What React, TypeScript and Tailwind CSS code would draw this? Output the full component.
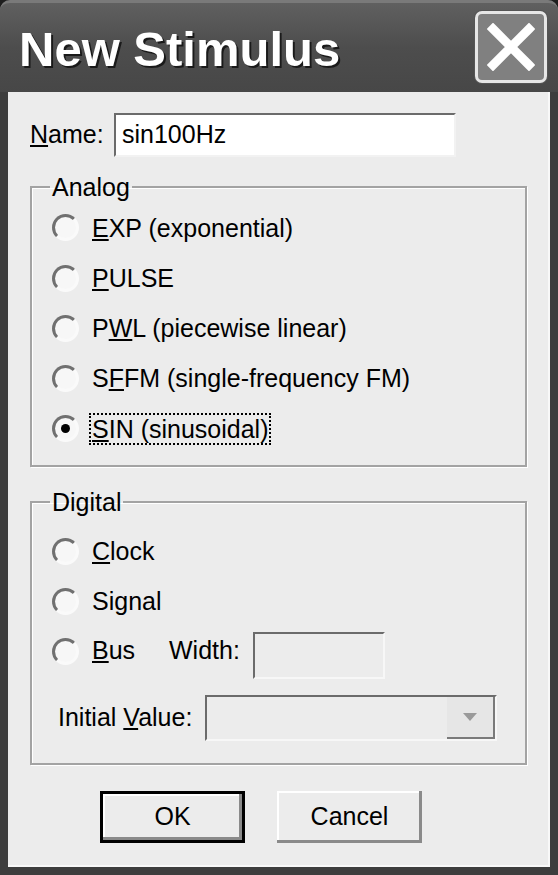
import React from 'react';

const font = { fontFamily: '"Liberation Sans", Arial, sans-serif' };

function Radio({ checked = false }: { checked?: boolean }) {
  return (
    <span className="relative flex h-[27px] w-[27px] shrink-0 items-center justify-center rounded-full border-[3px] border-t-[#707070] border-l-[#707070] border-r-[#fafafa] border-b-[#fafafa] bg-[#f7f7f7]">
      {checked && <span className="h-[9px] w-[9px] rounded-full bg-black" />}
    </span>
  );
}

function RadioRow({
  label,
  checked,
  focused,
  height = 'h-[50px]',
}: {
  label: React.ReactNode;
  checked?: boolean;
  focused?: boolean;
  height?: string;
}) {
  return (
    <div className={`flex items-center ${height}`}>
      <Radio checked={checked} />
      <span
        className={
          focused
            ? 'ml-[10px] border-2 border-dotted border-black px-[1px] leading-[28px]'
            : 'ml-[13px] leading-[28px]'
        }
      >
        {label}
      </span>
    </div>
  );
}

const etched =
  'border-2 border-[#a3a3a3] shadow-[inset_1px_1px_0_#ffffff,1px_1px_0_#ffffff]';

export default function App() {
  return (
    <div
      className="flex h-[875px] w-[558px] flex-col overflow-hidden bg-[#1e1e1e] text-[25px] text-black"
      style={font}
    >
      <div className="flex h-full flex-col rounded-t-[10px] bg-[#3d3d3d]">
        {/* Title bar */}
        <div className="flex h-[92px] shrink-0 items-center justify-between rounded-t-[10px] border-t-[3px] border-[#7a7a7a] bg-gradient-to-b from-[#606060] via-[#4d4d4d] to-[#474747] pl-[19px] pr-[11px]">
          <span className="mt-[4px] text-[49px] font-bold text-white [text-shadow:2px_2px_0_#1a1a1a]">
            New Stimulus
          </span>
          <div className="mt-[-1px] flex h-[72px] w-[72px] items-center justify-center rounded-[7px] border-[3px] border-[#e6e6e6] bg-[#808080] shadow-[0_0_0_1px_#555]">
            <svg width="48" height="48" viewBox="0 0 48 48">
              <path d="M6 6 L42 42 M42 6 L6 42" stroke="#ffffff" strokeWidth="9" strokeLinecap="square" />
            </svg>
          </div>
        </div>

        {/* Client area */}
        <div className="mx-[8px] mb-[8px] flex flex-1 flex-col bg-[#ececec] pl-[22px] pt-[21px] shadow-[inset_-2px_0_0_#f8f8f8,inset_0_-2px_0_#f8f8f8]">
          {/* Name */}
          <div className="flex items-center">
            <span className="w-[84px]">
              <u>N</u>ame:
            </span>
            <div className="flex h-[44px] w-[342px] items-center border-2 border-t-[#6b6b6b] border-l-[#6b6b6b] border-r-[#f2f2f2] border-b-[#f2f2f2] bg-white pl-[6px]">
              sin100Hz
            </div>
          </div>

          {/* Analog */}
          <fieldset className={`mt-[16px] w-[497px] pb-[11px] pl-[18px] ${etched}`}>
            <legend className="px-[2px] leading-[28px]">Analog</legend>
            <div className="ml-[2px] pt-[1px]">
              <RadioRow label={<><u>E</u>XP (exponential)</>} height="h-[51px]" />
              <RadioRow label={<><u>P</u>ULSE</>} height="h-[50px]" />
              <RadioRow label={<>P<u>W</u>L (piecewise linear)</>} height="h-[50px]" />
              <RadioRow label={<>S<u>F</u>FM (single-frequency FM)</>} height="h-[50px]" />
              <RadioRow label={<><u>S</u>IN (sinusoidal)</>} checked focused height="h-[51px]" />
            </div>
          </fieldset>

          {/* Digital */}
          <fieldset className={`mt-[21px] w-[497px] pb-[22px] pl-[18px] ${etched}`}>
            <legend className="px-[2px] leading-[28px]">Digital</legend>
            <div className="ml-[2px] pt-[10px]">
              <RadioRow label={<><u>C</u>lock</>} />
              <RadioRow label="Signal" />
              <div className="flex h-[50px] items-center">
                <Radio />
                <span className="ml-[13px] w-[77px]">
                  <u>B</u>us
                </span>
                <span className="w-[84px]">Width:</span>
                <div className="mt-[8px] h-[47px] w-[132px] border-2 border-t-[#6b6b6b] border-l-[#6b6b6b] border-r-[#f7f7f7] border-b-[#f7f7f7] bg-[#ececec]" />
              </div>
              <div className="mt-[19px] flex items-center">
                <span className="ml-[6px] w-[147px]">
                  Initial <u>V</u>alue:
                </span>
                <div className="flex h-[46px] w-[292px] items-stretch justify-end border-2 border-t-[#6b6b6b] border-l-[#6b6b6b] border-r-[#f7f7f7] border-b-[#f7f7f7] bg-[#ececec]">
                  <div className="flex w-[48px] items-center justify-center border-b-2 border-r-2 border-[#7a7a7a] bg-[#e6e6e6]">
                    <svg width="16" height="10" viewBox="0 0 16 10">
                      <path d="M1 1 H15 L8 9 Z" fill="#9a9a9a" />
                    </svg>
                  </div>
                </div>
              </div>
            </div>
          </fieldset>

          {/* Buttons */}
          <div className="ml-[70px] mt-[26px] flex gap-[32px]">
            <button className="h-[52px] w-[145px] border-[3px] border-black bg-[#ececec] shadow-[inset_-3px_-3px_0_#8a8a8a,inset_2px_2px_0_#ffffff]">
              OK
            </button>
            <button className="h-[52px] w-[145px] border-[#ececec] bg-[#ececec] shadow-[inset_-3px_-3px_0_#8a8a8a,inset_2px_2px_0_#ffffff]">
              Cancel
            </button>
          </div>
        </div>
      </div>
    </div>
  );
}
